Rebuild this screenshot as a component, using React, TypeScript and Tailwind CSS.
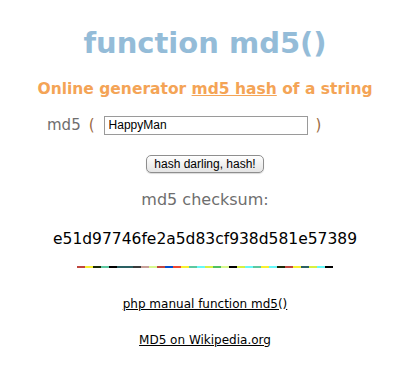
const bar = [
  "#c0463e", "#f8f030", "#1a2a08", "#5cc8a0", "#000000", "#2a6062", "#2a6062", "#3a3a3a",
  "#c8a098", "#d8f890", "#c0463e", "#0050d0", "#f04830", "#f8f030", "#5cc8a0", "#66f8f8",
  "#d8f040", "#50c060", "#d8f890", "#000000", "#d8f040", "#66f8f8", "#5cc8a0", "#f8f030",
  "#66f8f8", "#1a2a08", "#c0463e", "#f8f030", "#2a6062", "#d8f040", "#66f8f8", "#000000",
];

export default function App() {
  return (
    <div className="flex h-[380px] w-[410px] flex-col items-center bg-white font-['DejaVu_Sans',sans-serif]">
      <h1 className="mt-[23px] text-[29px] leading-[40px] font-bold text-[#94bcd8]">function md5()</h1>
      <h2 className="mt-[15px] text-[15.5px] leading-[22px] font-bold text-[#f4a456]">
        Online generator <span className="underline">md5 hash</span> of a string
      </h2>
      <div className="mt-[14px] flex w-full items-center pl-[47px]">
        <span className="text-[15px] text-[#6e6e6e]">md5</span>
        <span className="ml-[8px] text-[15px] text-[#9a6a44]">(</span>
        <input
          defaultValue="HappyMan"
          className="ml-[9px] h-[19px] w-[204px] border border-[#9a9a9a] px-[4px] font-['Liberation_Sans',sans-serif] text-[12px] text-black outline-none"
        />
        <span className="ml-[8px] text-[15px] text-[#9a6a44]">)</span>
      </div>
      <button className="mt-[18px] h-[18px] rounded-[5px] border border-[#8e8e8e] bg-gradient-to-b from-white to-[#e4e4e4] px-[7px] font-['Liberation_Sans',sans-serif] text-[12px] leading-[16px] text-black shadow-[0_1px_1px_rgba(0,0,0,0.15)]">
        hash darling, hash!
      </button>
      <div className="mt-[18px] text-[16px] leading-[18px] text-[#6e6e6e]">md5 checksum:</div>
      <div className="mt-[21px] text-[15.5px] leading-[18px] text-black">e51d97746fe2a5d83cf938d581e57389</div>
      <div className="mt-[18px] flex h-[2px]">
        {bar.map((c, i) => (
          <div key={i} className="h-[2px] w-[8px]" style={{ backgroundColor: c }} />
        ))}
      </div>
      <a href="#" className="mt-[29px] text-[12px] leading-[15px] text-black underline">
        php manual function md5()
      </a>
      <a href="#" className="mt-[21px] text-[12px] leading-[15px] text-black underline">
        MD5 on Wikipedia.org
      </a>
    </div>
  );
}
